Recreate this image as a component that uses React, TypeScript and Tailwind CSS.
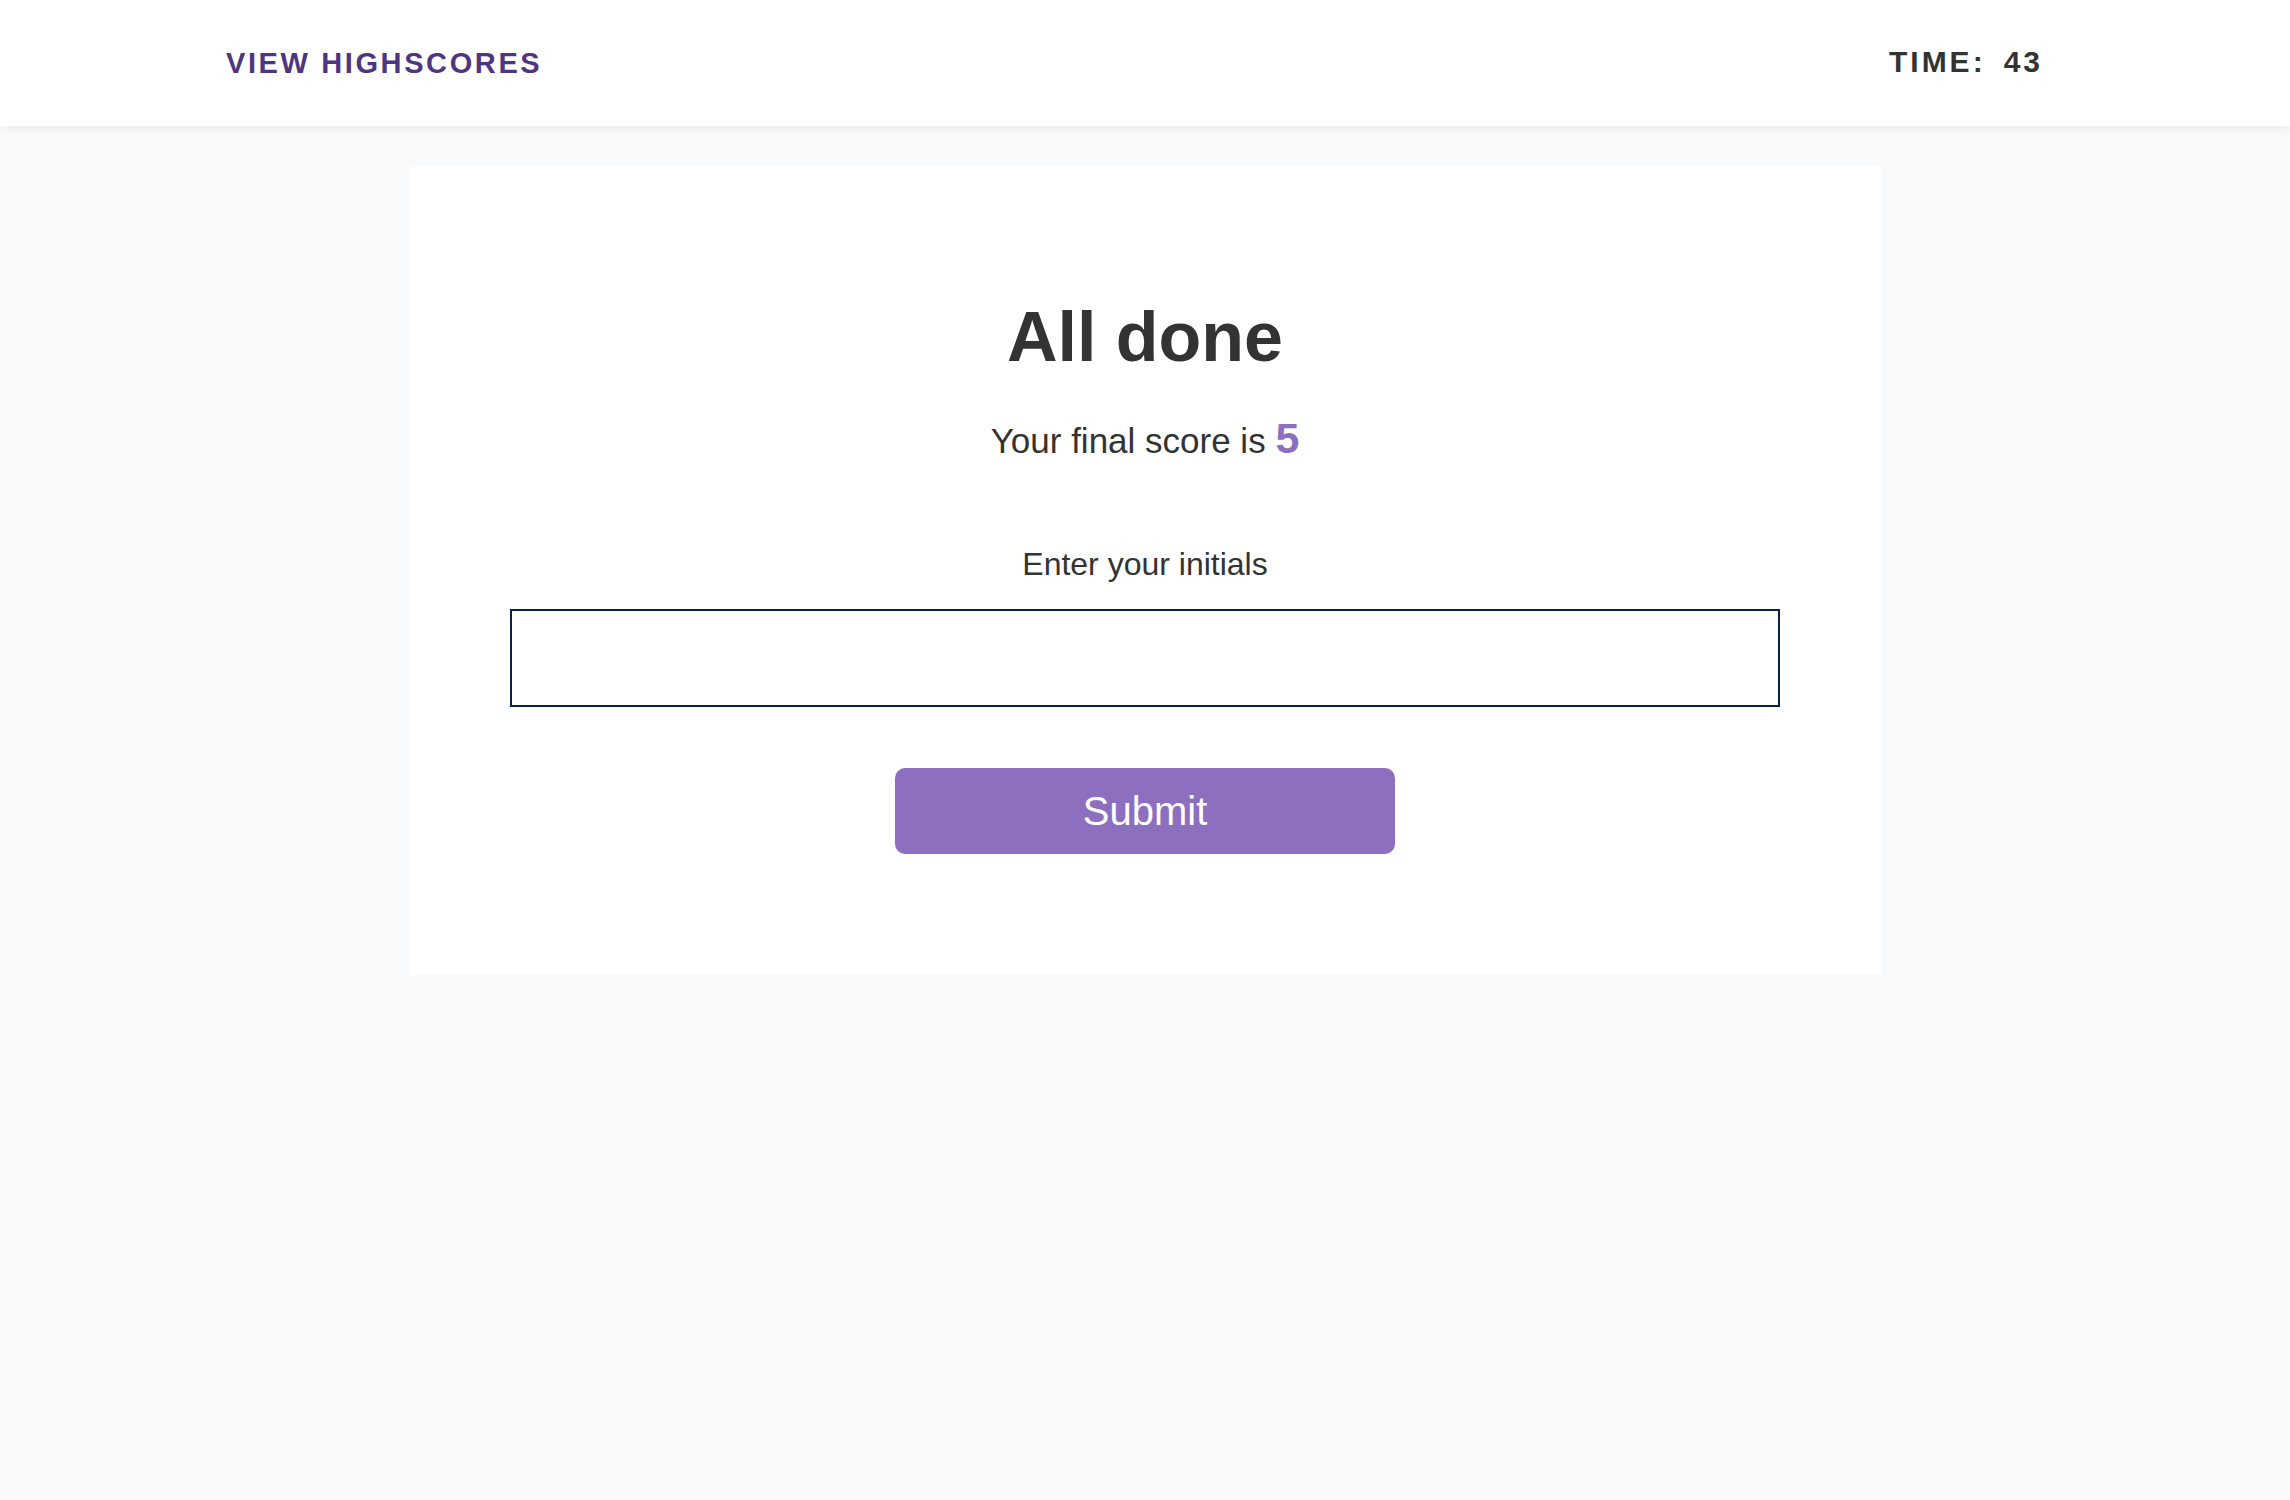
import React, { useState } from 'react';

const font = { fontFamily: '"Liberation Sans", Arial, Helvetica, sans-serif' };

const App: React.FC = () => {
    const [initials, setInitials] = useState('');
    const score = 5;
    const timeLeft = 43;

    return (
        <div className="min-h-[1500px] bg-[#f9fafb] text-[#333333]" style={font}>
            {/* Header */}
            <header className="h-[126px] bg-white shadow-[0_2px_10px_rgba(0,0,0,0.07)] flex items-center justify-between pl-[226px] pr-[247px] relative">
                <a href="#" className="text-[29px] font-bold uppercase tracking-[0.09em] text-[#4e3581] leading-none">
                    View Highscores
                </a>
                <div className="text-[30px] font-bold uppercase tracking-[0.1em] text-[#333333] leading-none -mt-[2px]">
                    Time:<span className="ml-[18px]">{timeLeft}</span>
                </div>
            </header>

            {/* Card */}
            <main className="mt-[40px] mx-auto w-[1472px] bg-white pt-[136px] pb-[121px] px-[101px] flex flex-col items-center">
                <h1 className="text-[70px] font-bold leading-none">All done</h1>
                <p className="mt-[45px] text-[35px] leading-none">
                    Your final score is <span className="text-[43px] font-bold text-[#8c6fc0]">{score}</span>
                </p>

                <label htmlFor="initials" className="mt-[88px] text-[32px] leading-none">
                    Enter your initials
                </label>
                <input
                    id="initials"
                    value={initials}
                    onChange={e => setInitials(e.target.value)}
                    className="mt-[29px] w-full h-[98px] border-2 border-[#0b2045] bg-white px-4 text-[32px] outline-none"
                />

                <button className="mt-[61px] w-[500px] h-[86px] rounded-[10px] bg-[#8c6fbf] text-white text-[40px] leading-none">
                    Submit
                </button>
            </main>
        </div>
    );
};

export default App;
